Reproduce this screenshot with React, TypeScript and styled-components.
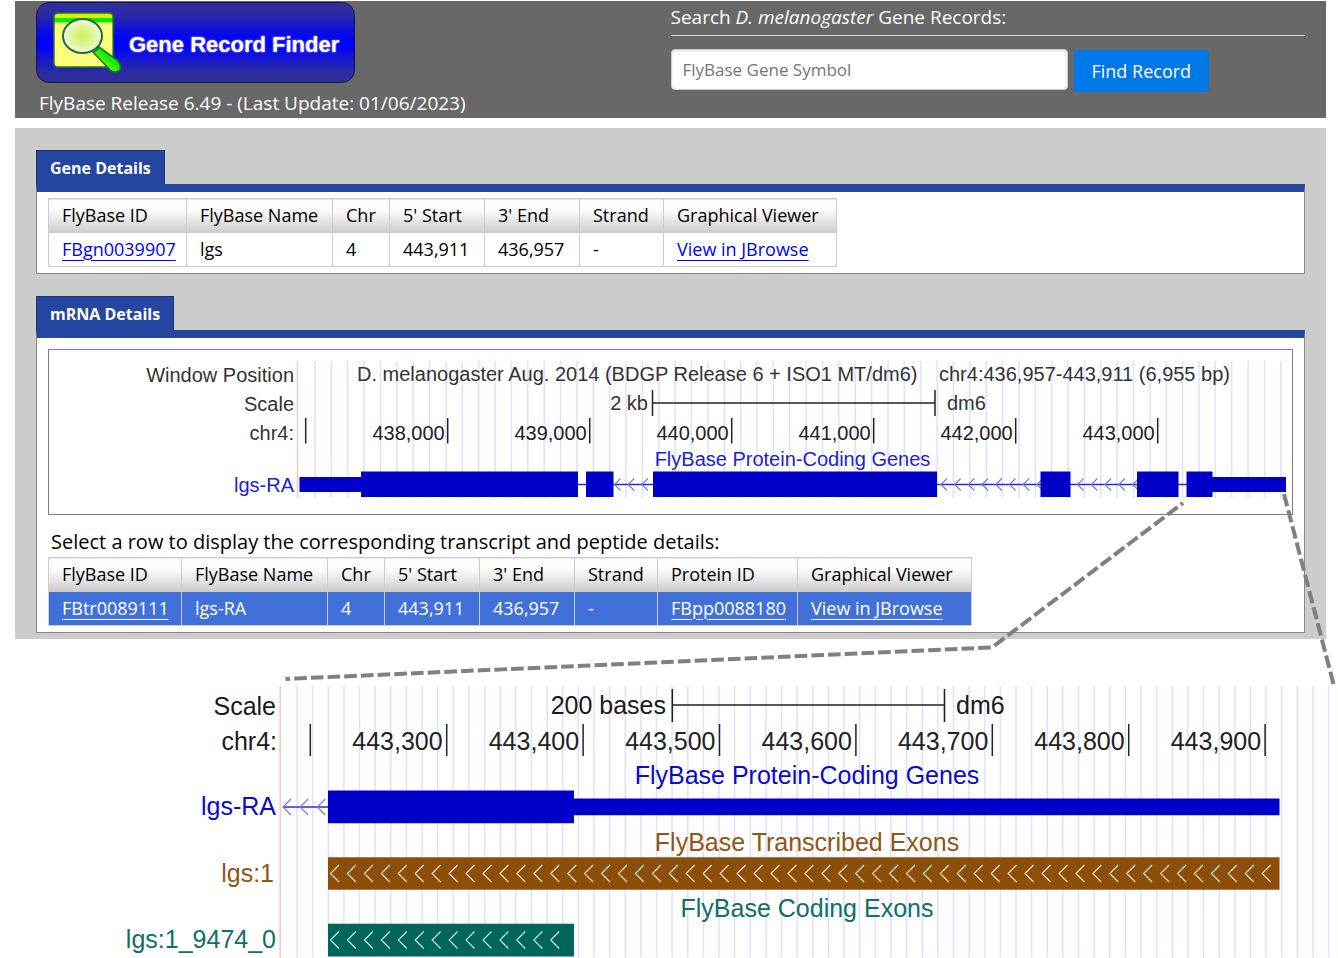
import React from "react";
import styled, { createGlobalStyle } from "styled-components";

const GlobalStyle = createGlobalStyle`
  *, *::before, *::after { box-sizing: border-box; }
  body {
    margin: 0;
    background: #fff;
    color: #000;
    font-family: "Open Sans", "Noto Sans", sans-serif;
    font-size: 18px;
    font-weight: 500;
    line-height: 24px;
  }
`;

const chartFont = '"Liberation Sans", Arial, sans-serif';

const Page = styled.div`
  position: relative;
`;

const Content = styled.div`
  display: flex;
  flex-direction: column;
  gap: 10px;
  padding: 1px 12px 0 15px;
`;

const Header = styled.header`
  display: grid;
  grid-template-columns: 1fr 1fr;
  min-height: 117px;
  padding: 1px 21px 0;
  background: #686868;
  color: #fff;
`;

const Brand = styled.div`
  display: flex;
  flex-direction: column;
  align-items: flex-start;
  gap: 8px;
`;

const LogoLink = styled.a`
  display: flex;
  align-items: center;
  width: 319px;
  height: 81px;
  padding-left: 15px;
  gap: 7px;
  border: 1px solid #15154a;
  border-radius: 13px;
  background: linear-gradient(#30309a 0%, #2a2aa8 15%, #0404f4 43%, #0000ff 54%, #1616d4 70%, #2c2c9e 88%, #30309a 100%);
  color: #fff;
  font: bold 22px/26px ${chartFont};
  text-decoration: none;
  text-shadow: 0 0 2px #ccf;
`;

const LogoText = styled.span`
  padding-top: 4px;
`;

const LogoIcon = styled.svg`
  flex: none;
  width: 70px;
  height: 66px;
`;

const Release = styled.p`
  margin: 0;
  padding-left: 3px;
  font-size: 19px;
`;

const Search = styled.form`
  display: flex;
  flex-direction: column;
  gap: 13px;
`;

const SearchLabel = styled.label`
  padding: 3px 0 6px;
  border-bottom: 1px solid #d8d8d8;
  font-size: 19px;
`;

const SearchRow = styled.div`
  display: flex;
  gap: 6px;
`;

const SearchInput = styled.input`
  width: 397px;
  height: 41px;
  padding: 0 11px;
  border: 1px solid #ccc;
  border-radius: 4px;
  background: #fff;
  box-shadow: inset 0 1px 3px #ddd;
  font: 500 17px/24px "Open Sans", sans-serif;
  &::placeholder { color: #757575; opacity: 1; }
`;

const SearchButton = styled.button`
  height: 42px;
  margin-top: 1px;
  padding: 0 18px;
  border: 0;
  border-radius: 2px;
  background: #0078e7;
  color: #fff;
  font: 500 18px/24px "Open Sans", sans-serif;
`;

const Main = styled.main`
  display: flex;
  flex-direction: column;
  gap: 22px;
  padding: 22px 21px 6px;
  background: #ccc;
`;

const Section = styled.section`
  display: flex;
  flex-direction: column;
  align-items: flex-start;
`;

const Tab = styled.h2`
  height: 34px;
  margin: 0;
  padding: 5px 13px;
  border: 1px solid #1d3270;
  border-bottom: 0;
  background: #2546a0;
  color: #fff;
  font-size: 16px;
  font-weight: 700;
  line-height: 24px;
`;

const Panel = styled.div<{ $top: number }>`
  align-self: stretch;
  padding: ${(p) => p.$top}px 11px 6px;
  border: 1px solid #888;
  border-top: 8px solid #2546a0;
  background: #fff;
`;

const Table = styled.table`
  table-layout: fixed;
  border-collapse: collapse;
`;

const Col = styled.col<{ $w: number }>`
  width: ${(p) => p.$w}px;
`;

const HeadCell = styled.th`
  height: 34px;
  padding: 0 0 2px 13px;
  border: 1px solid #ccc;
  background: linear-gradient(#fff 0%, #fafafa 35%, #ccc 100%);
  font-weight: 500;
  text-align: left;
  white-space: nowrap;
`;

const Cell = styled.td<{ $selected?: boolean }>`
  height: 34px;
  padding: 0 0 2px 13px;
  border: 1px solid #ccc;
  background: ${(p) => (p.$selected ? "#4170d8" : "#fff")};
  color: ${(p) => (p.$selected ? "#fff" : "#000")};
  white-space: nowrap;
`;

const CellLink = styled.a<{ $selected?: boolean }>`
  color: ${(p) => (p.$selected ? "#fff" : "#00f")};
  text-decoration: underline;
  text-decoration-thickness: 1px;
  text-underline-offset: 4px;
`;

const Hint = styled.p`
  margin: 15px 0 3px 3px;
  font-size: 20px;
`;

const Frame = styled.div`
  border: 1px solid #808080;
`;

const Chart = styled.svg`
  display: block;
  width: 100%;
  font-family: ${chartFont};
  font-weight: 400;
`;

const Zoomed = styled.div`
  padding-top: 46px;
`;

const Connector = styled.svg`
  position: absolute;
  top: 0;
  left: 0;
  width: 100%;
  pointer-events: none;
`;

type Row = { text: string; link?: boolean }[];

function DataTable({ widths, heads, row, selected }: { widths: number[]; heads: string[]; row: Row; selected?: boolean }) {
  const total = widths.reduce((a, b) => a + b, 0);
  return (
    <Table width={total}>
      <colgroup>{widths.map((w, i) => <Col key={i} $w={w} />)}</colgroup>
      <thead>
        <tr>{heads.map((h) => <HeadCell key={h} scope="col">{h}</HeadCell>)}</tr>
      </thead>
      <tbody>
        <tr>
          {row.map((c, i) => (
            <Cell key={i} $selected={selected}>
              {c.link ? <CellLink href="#" $selected={selected}>{c.text}</CellLink> : c.text}
            </Cell>
          ))}
        </tr>
      </tbody>
    </Table>
  );
}

function GridLines({ start, step, count, top, bottom }: { start: number; step: number; count: number; top: number; bottom: number }) {
  const d = Array.from({ length: count }, (_, i) => `M${(start + i * step).toFixed(1)} ${top}V${bottom}`).join("");
  return <path d={d} stroke="#e0e0ff" strokeWidth="1.5" />;
}

function Chevrons({ start, step, count, y, w, h, color }: { start: number; step: number; count: number; y: number; w: number; h: number; color: string }) {
  const d = Array.from({ length: count }, (_, i) => {
    const x = start + i * step;
    return `M${(x + w).toFixed(1)} ${y - h}L${x.toFixed(1)} ${y}L${(x + w).toFixed(1)} ${y + h}`;
  }).join("");
  return <path d={d} fill="none" stroke={color} strokeWidth="1.1" />;
}

function Ticks({ labels, start, step, top, bottom, baseline, gap }: { labels: string[]; start: number; step: number; top: number; bottom: number; baseline: number; gap: number }) {
  return (
    <g fill="#222">
      {labels.map((label, i) => {
        const x = start + i * step;
        return (
          <g key={i}>
            <path d={`M${x} ${top}V${bottom}`} stroke="#222" strokeWidth="1.5" />
            {label && <text x={x - gap} y={baseline} textAnchor="end">{label}</text>}
          </g>
        );
      })}
    </g>
  );
}

function GeneChart() {
  return (
    <Chart viewBox="49 350 1243 164" fontSize="20" role="img" aria-label="lgs gene model">
      <GridLines start={315} step={16.37} count={60} top={361} bottom={498} />
      <path d="M297.5 361V498" stroke="#ffc4c4" strokeWidth="1.5" />
      <g fill="#333">
        <text x="294" y="382" textAnchor="end">Window Position</text>
        <text x="357" y="381">D. melanogaster Aug. 2014 (BDGP Release 6 + ISO1 MT/dm6)</text>
        <text x="939" y="381">chr4:436,957-443,911 (6,955 bp)</text>
        <text x="294" y="411" textAnchor="end">Scale</text>
        <text x="648" y="410" textAnchor="end">2 kb</text>
        <text x="947" y="410">dm6</text>
        <text x="294" y="440" textAnchor="end">chr4:</text>
      </g>
      <path d="M652.5 390V416M935 390V416M652.5 403H935" stroke="#222" strokeWidth="1.5" />
      <Ticks labels={["", "438,000", "439,000", "440,000", "441,000", "442,000", "443,000"]} start={305.7} step={142} top={418} bottom={443.5} baseline={440} gap={3} />
      <text x="792.5" y="466" textAnchor="middle" fill="#2222d2">FlyBase Protein-Coding Genes</text>
      <text x="294" y="492" textAnchor="end" fill="#2222d2">lgs-RA</text>
      <path d="M578 484.5H1190" stroke="#2a2ad2" strokeWidth="1.3" />
      <Chevrons start={614.5} step={13.7} count={3} y={484.5} w={6} h={6} color="#7676e4" />
      <Chevrons start={941} step={13.7} count={8} y={484.5} w={6} h={6} color="#7676e4" />
      <Chevrons start={1077.5} step={13.8} count={5} y={484.5} w={6} h={6} color="#7676e4" />
      <path
        d="M299.5 477H361V492H299.5ZM361 471.5H578V497H361ZM586 471.5H613.5V497H586ZM653 471.5H937V497H653ZM1040.5 471.5H1070.5V497H1040.5ZM1137 471.5H1178.5V497H1137ZM1186.5 471.5H1212.5V497H1186.5ZM1212 477H1286V492H1212Z"
        fill="#0000c8"
      />
    </Chart>
  );
}

function ExonChart() {
  return (
    <Chart viewBox="0 685 1338 273" fontSize="25" role="img" aria-label="First exon of lgs in detail">
      <GridLines start={297} step={15.63} count={67} top={686} bottom={957.5} />
      <path d="M280.2 686V957.5" stroke="#ffc4c4" strokeWidth="1.6" />
      <g fill="#1a1a1a">
        <text x="276" y="715" textAnchor="end">Scale</text>
        <text x="666" y="714" textAnchor="end">200 bases</text>
        <text x="956" y="714">dm6</text>
        <text x="277" y="750" textAnchor="end">chr4:</text>
      </g>
      <path d="M672.3 689V722M944.5 689V722M672.3 705H944.5" stroke="#222" strokeWidth="1.6" />
      <Ticks labels={["", "443,300", "443,400", "443,500", "443,600", "443,700", "443,800", "443,900"]} start={310.3} step={136.4} top={724} bottom={756} baseline={750} gap={4} />
      <g fill="#0a0acc">
        <text x="807" y="784" textAnchor="middle">FlyBase Protein-Coding Genes</text>
        <text x="276" y="815" textAnchor="end">lgs-RA</text>
      </g>
      <path d="M283 807H328" stroke="#2a2ad2" strokeWidth="1.5" />
      <Chevrons start={283} step={17.1} count={3} y={807} w={8} h={8} color="#7676e4" />
      <path d="M328 790.5H574V823.3H328ZM574 798.5H1279.5V815.3H574Z" fill="#0000c8" />
      <g fill="#8f5614">
        <text x="807" y="851" textAnchor="middle">FlyBase Transcribed Exons</text>
        <text x="274" y="882" textAnchor="end">lgs:1</text>
      </g>
      <path d="M328 857.3H1279.5V889.7H328Z" fill="#8b4f0a" />
      <Chevrons start={330.5} step={16.94} count={56} y={873.5} w={8.5} h={8.5} color="#f3e6d4" />
      <g fill="#0f7065">
        <text x="807" y="917" textAnchor="middle">FlyBase Coding Exons</text>
        <text x="276" y="948" textAnchor="end">lgs:1_9474_0</text>
      </g>
      <path d="M328 923.7H574V956.5H328Z" fill="#00665c" />
      <Chevrons start={330.5} step={16.94} count={14} y={940} w={8.5} h={8.5} color="#d4efea" />
    </Chart>
  );
}

function FinderIcon() {
  return (
    <LogoIcon viewBox="0 0 70 66" aria-hidden="true">
      <defs>
        <radialGradient id="lens" cx="50%" cy="50%" r="50%">
          <stop offset="0" stopColor="#d2f060" />
          <stop offset="0.5" stopColor="#dcf490" />
          <stop offset="1" stopColor="#eef8e6" />
        </radialGradient>
        <linearGradient id="handle" x1="0" y1="1" x2="1" y2="0">
          <stop offset="0.3" stopColor="#8cf000" />
          <stop offset="0.55" stopColor="#10ee10" />
        </linearGradient>
        <linearGradient id="sheet" x1="0" y1="0" x2="0" y2="1">
          <stop offset="0" stopColor="#c8e800" />
          <stop offset="0.08" stopColor="#f4f000" />
          <stop offset="0.1" stopColor="#00f000" />
          <stop offset="0.16" stopColor="#00f000" />
          <stop offset="0.19" stopColor="#ffff80" />
          <stop offset="1" stopColor="#ffff7a" />
        </linearGradient>
      </defs>
      <path d="M6 3Q2 3 2 7L2 53Q2 57 6 57L57 57Q61 57 61 53V7Q61 3 57 3Z" fill="url(#sheet)" stroke="#2c7a10" strokeWidth="1.3" />
      <path d="M41 42Q45 41 47 37L65 50Q70 55 68 60Q63 64 58 60Z" fill="url(#handle)" stroke="#187818" strokeWidth="1.6" />
      <ellipse cx="30.500" cy="26" rx="19.500" ry="17" fill="url(#lens)" stroke="#1d6e35" strokeWidth="2" />
    </LogoIcon>
  );
}

export default function App() {
  return (
    <Page>
      <GlobalStyle />
      <Content>
        <Header>
          <Brand>
            <LogoLink href="#">
              <FinderIcon />
              <LogoText>Gene Record Finder</LogoText>
            </LogoLink>
            <Release>FlyBase Release 6.49 - (Last Update: 01/06/2023)</Release>
          </Brand>
          <Search onSubmit={(e) => e.preventDefault()}>
            <SearchLabel htmlFor="symbol">
              Search <em>D. melanogaster</em> Gene Records:
            </SearchLabel>
            <SearchRow>
              <SearchInput id="symbol" type="text" placeholder="FlyBase Gene Symbol" />
              <SearchButton type="submit">Find Record</SearchButton>
            </SearchRow>
          </Search>
        </Header>
        <Main>
          <Section>
            <Tab>Gene Details</Tab>
            <Panel $top={6}>
              <DataTable
                widths={[138, 146, 57, 95, 95, 84, 173]}
                heads={["FlyBase ID", "FlyBase Name", "Chr", "5' Start", "3' End", "Strand", "Graphical Viewer"]}
                row={[
                  { text: "FBgn0039907", link: true },
                  { text: "lgs" },
                  { text: "4" },
                  { text: "443,911" },
                  { text: "436,957" },
                  { text: "-" },
                  { text: "View in JBrowse", link: true },
                ]}
              />
            </Panel>
          </Section>
          <Section>
            <Tab>mRNA Details</Tab>
            <Panel $top={11}>
              <Frame>
                <GeneChart />
              </Frame>
              <Hint>Select a row to display the corresponding transcript and peptide details:</Hint>
              <DataTable
                selected
                widths={[133, 146, 57, 95, 95, 83, 140, 174]}
                heads={["FlyBase ID", "FlyBase Name", "Chr", "5' Start", "3' End", "Strand", "Protein ID", "Graphical Viewer"]}
                row={[
                  { text: "FBtr0089111", link: true },
                  { text: "lgs-RA" },
                  { text: "4" },
                  { text: "443,911" },
                  { text: "436,957" },
                  { text: "-" },
                  { text: "FBpp0088180", link: true },
                  { text: "View in JBrowse", link: true },
                ]}
              />
            </Panel>
          </Section>
        </Main>
      </Content>
      <Zoomed>
        <ExonChart />
      </Zoomed>
      <Connector viewBox="0 0 1338 958" aria-hidden="true">
        <g fill="none" stroke="#808080" strokeWidth="4">
          <path d="M285.500 679L992 647.500L1183 503" strokeDasharray="12.600 4.100" strokeDashoffset="8" />
          <path d="M1284 494L1333.500 684" strokeDasharray="12.600 4.100" />
        </g>
      </Connector>
    </Page>
  );
}
